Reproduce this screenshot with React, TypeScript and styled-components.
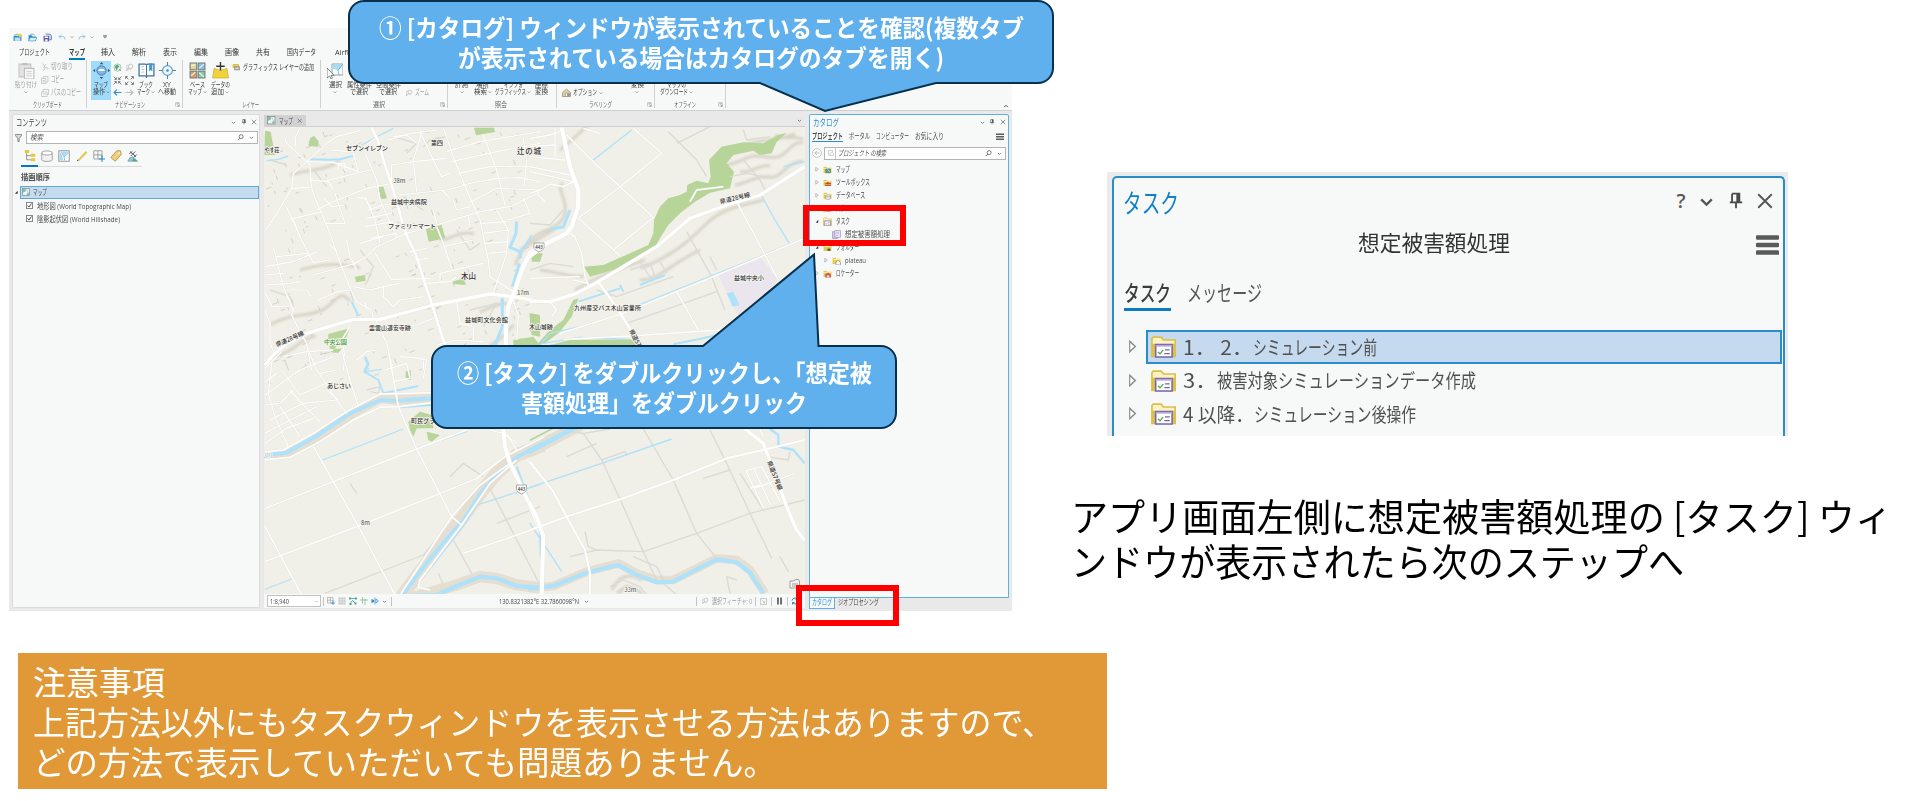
import React, { useLayoutEffect, useRef, useState } from "react";
import styled, { createGlobalStyle } from "styled-components";

const JP = '"Noto Sans CJK JP", sans-serif';
const UI = '"Open Sans", "Noto Sans CJK JP", sans-serif';
const BLUE = "#0079c1";
const INK = "#4a4a4a";

const Global = createGlobalStyle`
  *, *::before, *::after { box-sizing: border-box; }
  body { margin: 0; background: #fff; font-family: ${JP}; }
  svg { display: block; flex: none; }
`;

/* ---------- condensed text ---------- */

const FitBox = styled.span<{ $w: number }>`
  display: inline-block;
  flex: none;
  width: ${(p) => p.$w}px;
  white-space: pre;
  text-align: left;
`;
const FitInner = styled.span`
  display: inline-block;
  transform-origin: 0 50%;
`;

/* Condenses or widens one line of text so that it takes exactly w pixels. */
function Fit({ w, children }: { w: number; children: string }) {
  const ref = useRef<HTMLSpanElement>(null);
  const [ratio, setRatio] = useState(1);
  useLayoutEffect(() => {
    if (ref.current && ref.current.offsetWidth) {
      setRatio(w / parseFloat(getComputedStyle(ref.current).width));
    }
  }, [w, children]);
  return (
    <FitBox $w={w}>
      <FitInner ref={ref} style={{ transform: `scaleX(${ratio})` }}>
        {children}
      </FitInner>
    </FitBox>
  );
}

/* ---------- icons (16 x 16 grid) ---------- */

const folder = (
  <>
    <path d="M1 3h5l1.5 2H15v9H1z" fill="#e6ca4c" />
    <path d="M2.5 5.5h11V7h-11z" fill="#fdf6cf" />
  </>
);
const mapTile = (
  <>
    <rect x="1" y="1" width="14" height="14" fill="#eef3f2" stroke="#6b7b80" strokeWidth="1.2" />
    <path d="M2 2h6l-1 5-5 2z" fill="#7fc29b" />
    <path d="M9 14l2-5 3 2v3z" fill="#7fc29b" />
    <path d="M10 2v4l4 4" stroke="#86bfd8" fill="none" />
  </>
);

const ICONS: Record<string, React.ReactNode> = {
  newProject: (
    <>
      <path d="M1 5h14v9H1z" fill="#2f8fc4" />
      <path d="M3 8h10v6H3z" fill="#bfe1f2" />
      <path d="M2 4l6-2 5 3" stroke="#3b6f8c" fill="none" />
      <circle cx="12.5" cy="4" r="3" fill="#f0cf45" />
    </>
  ),
  open: (
    <>
      <path d="M1 4h6l1 2h6v8H1z" fill="#2f8fc4" />
      <path d="M4 8h12l-3 6H1z" fill="#d9edf7" stroke="#2f8fc4" />
      <path d="M3 4c2-3 6-3 9 0" stroke="#3b6f8c" fill="none" />
    </>
  ),
  save: (
    <>
      <path d="M5 2h8l2 3v7h-4" fill="#cfe0f0" stroke="#4a6d93" strokeWidth="1.3" />
      <path d="M1 5h10v10H1z" fill="#6a5aa8" />
      <path d="M3 6h6v3H3zM4 11h4v4H4z" fill="#fff" />
    </>
  ),
  undo: <path d="M6 3L2 7l4 4M2 7h8q4 0 4 6" stroke="#8fbfe0" strokeWidth="1.8" fill="none" />,
  redo: <path d="M10 3l4 4-4 4M14 7H6q-4 0-4 6" stroke="#8fbfe0" strokeWidth="1.8" fill="none" />,
  chev: <path d="M3 6l5 5 5-5" stroke="#555" strokeWidth="2.2" fill="none" />,
  up: <path d="M3 11l5-5 5 5" stroke="#444" strokeWidth="2.4" fill="none" />,
  qat: <path d="M3 4h10M4 7l4 4 4-4z" stroke="#555" strokeWidth="1.6" fill="none" />,
  pin: (
    <>
      <path d="M4.500 1.500h6.500V9M4.500 1.500V9M2.500 9.300h11M8 9v5.500" stroke="#4a4a4a" strokeWidth="1.600" fill="none" />
      <path d="M8.300 1.500h3V9h-3z" fill="#4a4a4a" />
    </>
  ),
  close: <path d="M2 2l12 12M14 2L2 14" stroke="#555" strokeWidth="1.7" fill="none" />,
  menu: <path d="M1 2.5h14M1 8h14M1 13.5h14" stroke="#5a5a5a" strokeWidth="3.200" strokeLinecap="round" />,
  search: (
    <>
      <circle cx="9.5" cy="6" r="4.6" stroke="#555" strokeWidth="1.7" fill="none" />
      <path d="M6 9.5L1.500 14" stroke="#555" strokeWidth="1.9" />
    </>
  ),
  filter: <path d="M1 1h14v2l-5.500 6v6h-3V9L1 3z" fill="#d8d8d8" stroke="#6a6a6a" strokeWidth="1.5" />,
  paste: (
    <>
      <path d="M1 2h11v12H1z" fill="#e3e3e3" stroke="#c4c4c4" />
      <path d="M4 1h5v2H4z" fill="#bdbdbd" />
      <path d="M6 6h9v10H6z" fill="#f6f6f6" stroke="#bcbcbc" />
      <path d="M8 9h5M8 11h5M8 13h5" stroke="#ccc" strokeWidth=".8" />
    </>
  ),
  cut: <path d="M3 1l7 10M10 2L5 10M3 13a2 2 0 1 0 2-3M10 11a2 2 0 1 1 3 2" stroke="#b9b9b9" strokeWidth="1.5" fill="none" />,
  copy: <path d="M1 5h9v10H1zM5 5V1h9v11h-4M3 9h5M3 12h5" stroke="#b9b9b9" strokeWidth="1.4" fill="none" />,
  copyPath: <path d="M1 6h11v9H1zM4 6V1h11v10h-3M4 10h6" stroke="#b9b9b9" strokeWidth="1.4" fill="none" />,
  explore: (
    <>
      <circle cx="8" cy="8" r="4.4" fill="#7fb6e8" stroke="#3d6fa3" strokeWidth=".8" />
      <path d="M5 8.500c0-3 6-3 6 0z" fill="#fff" />
      <path d="M8 0l1.700 2H6.300zM8 16l1.700-2H6.300zM0 8l2-1.700v3.400zM16 8l-2-1.700v3.400z" fill="#44545f" />
    </>
  ),
  globe: (
    <>
      <circle cx="8" cy="8" r="6.500" fill="#d6efe3" stroke="#8fa5a8" />
      <path d="M4 5l4-2 3 3-3 3-1 4-3-4z" fill="#53a56d" />
      <path d="M11 11l3 3" stroke="#888" strokeWidth="1.500" />
    </>
  ),
  zoomSel: (
    <>
      <path d="M3 4h8v7H3z" fill="#eee" stroke="#c7c7c7" />
      <circle cx="10" cy="6" r="4" stroke="#c0c0c0" strokeWidth="1.500" fill="#f7f7f7" />
      <path d="M7 9l-5 5" stroke="#c0c0c0" strokeWidth="2" />
    </>
  ),
  shrink: <path d="M1 1l5 5M2.500 6H6V2.500M15 1l-5 5M13.500 6H10V2.500M1 15l5-5M2.500 10H6v3.500M15 15l-5-5M13.500 10H10v3.500" stroke="#555" strokeWidth="1.300" fill="none" />,
  grow: <path d="M6 6L1.500 1.500M5 1H1v4M10 6l4.500-4.500M11 1h4v4M6 10l-4.500 4.500M5 15H1v-4M10 10l4.500 4.500M11 15h4v-4" stroke="#555" strokeWidth="1.300" fill="none" />,
  back: <path d="M7 3L2 8l5 5M2 8h13" stroke="#2d8ccc" strokeWidth="2" fill="none" />,
  fwd: <path d="M9 3l5 5-5 5M14 8H1" stroke="#b9b9b9" strokeWidth="2" fill="none" />,
  book: (
    <>
      <path d="M1 2h6q1 0 1 1 0-1 1-1h6v11H9q-1 0-1 2 0-2-1-2H1z" fill="#fff" stroke="#41729c" strokeWidth="1.200" />
      <path d="M8 3v11" stroke="#41729c" />
      <path d="M10.500 1.500h3V9L12 7.500 10.500 9z" fill="#3d9bd6" />
      <path d="M3 4.500h3M3 7h3M3 9.500h3" stroke="#9fb6c6" strokeWidth=".7" />
    </>
  ),
  xy: (
    <>
      <circle cx="8" cy="8" r="4.600" stroke="#56a8dc" strokeWidth="1.100" fill="#f2f9fd" />
      <circle cx="8" cy="8" r="1.200" fill="#2d8ccc" />
      <path d="M8 0v3.500M8 12.500V16M0 8h3.500M12.500 8H16" stroke="#777" />
    </>
  ),
  basemap: (
    <>
      <path d="M1 1h6.300v6.300H1z" fill="#e6d58b" stroke="#6f7f7f" />
      <path d="M8.700 1H15v6.300H8.700z" fill="#87bfe0" stroke="#6f7f7f" />
      <path d="M1 8.700h6.300V15H1z" fill="#dd9a62" stroke="#6f7f7f" />
      <path d="M8.700 8.700H15V15H8.700z" fill="#8dc79e" stroke="#6f7f7f" />
      <path d="M2 3.500l4-1M9.500 6l4.500-4M2 13l4-3.500M9.500 10l4.500 4" stroke="#f4f4ec" strokeWidth="1.100" fill="none" />
    </>
  ),
  addData: (
    <>
      <path d="M2 6l6 2 6-2 1.500 9H.5z" fill="#f0d33c" stroke="#cfae28" strokeWidth=".700" />
      <path d="M8 0v8M4 4h8" stroke="#333" strokeWidth="1.300" />
    </>
  ),
  graphics: (
    <>
      <path d="M2 3h11v6H2z" fill="#f0d33c" stroke="#bd9a1e" />
      <path d="M5 7h10v7H5z" fill="#b6b6b6" stroke="#777" />
      <path d="M7 12l3-3 3 3z" fill="#efe3a0" />
    </>
  ),
  select: (
    <>
      <path d="M5 1h11v11H5z" fill="#fff" stroke="#7f9aa8" strokeWidth=".900" />
      <path d="M5.500 1.500h10l-4.500 6-5.500-2z" fill="#a6dcf3" />
      <path d="M15.500 1.500l-4.500 6 1 4.500" stroke="#56a8dc" fill="none" strokeWidth=".800" />
      <path d="M0 5v10l2.500-2 1.700 3 1.300-.8-1.500-2.800H7z" fill="#fff" stroke="#666" strokeWidth=".800" />
    </>
  ),
  house: (
    <>
      <path d="M1 8l7-6 7 6v7H1z" fill="#e9cf9e" stroke="#7c6a48" />
      <path d="M6 9h4v6H6z" fill="#fff" stroke="#777" />
      <circle cx="12" cy="12" r="3" fill="#999" />
    </>
  ),
  launcher: <path d="M2 14V2h12M5 5h9v9H5M7 7l6 6M13 9v4H9" stroke="#777" strokeWidth="1.300" fill="none" />,
  map: mapTile,
  tree: (
    <>
      <path d="M1 0h6v4H1zM9 5h6v4H9zM9 11h6v4H9z" fill="#e8c83c" />
      <path d="M3.500 4v9H9M3.500 7.500H9" stroke="#777" fill="none" />
    </>
  ),
  db: (
    <>
      <path d="M1 4v9c0 3 14 3 14 0V4" fill="#f2f2f2" stroke="#8a8a8a" />
      <ellipse cx="8" cy="4" rx="7" ry="2.700" fill="#fff" stroke="#8a8a8a" />
    </>
  ),
  selMap: (
    <>
      <path d="M1 1h14v14H1z" fill="#fff" stroke="#777" />
      <path d="M2 2h3l3 6 6-5v-1H2zM2 2v12h5L5 6z" fill="#a6dcf3" />
      <path d="M4 2l4 7 6-5M8 9l1 5" stroke="#56a8dc" fill="none" strokeWidth=".900" />
    </>
  ),
  pencil: (
    <>
      <path d="M2 14L13 2l1.500 1.500L3.500 14.500z" fill="#f0d33c" stroke="#c9a626" strokeWidth=".700" />
      <path d="M1 15l1-2.500L3.500 14z" fill="#555" />
    </>
  ),
  snap: (
    <>
      <path d="M1 1h11v11H1zM6.500 1v11M1 6.500h11" stroke="#888" fill="none" />
      <path d="M12 7v9M8 12h8" stroke="#2d8ccc" strokeWidth="1.500" />
    </>
  ),
  tag: (
    <>
      <path d="M1 10L9 1h5l1 5-8 9z" fill="#efd07c" stroke="#a48640" />
      <circle cx="12" cy="4" r="1.100" fill="#fff" />
    </>
  ),
  imagery: (
    <>
      <path d="M1 15l3-5 4-1 6 6z" fill="#8cc9e8" stroke="#568" strokeWidth=".600" />
      <path d="M4 2l8 7M5 8l6-6M3 5l4-3M9 10l4-4" stroke="#555" strokeWidth="1.300" />
      <path d="M9 11l5 4H7z" fill="#5ba56e" />
    </>
  ),
  fMap: (
    <>
      {folder}
      <path d="M5 7h8v7H5z" fill="#5ba58a" stroke="#46707c" />
      <path d="M8 8l4 4" stroke="#fff" />
    </>
  ),
  fTool: (
    <>
      {folder}
      <path d="M4 9h10v5H4z" fill="#c7402f" />
      <path d="M6 9q3-4 6 0" stroke="#c7402f" strokeWidth="1.400" fill="none" />
      <path d="M4 11.500h10" stroke="#fff" strokeWidth=".800" />
    </>
  ),
  fDb: (
    <>
      {folder}
      <path d="M5 8.500v5c0 2 8 2 8 0v-5" fill="#eee" stroke="#8a8a8a" />
      <ellipse cx="9" cy="8.500" rx="4" ry="1.500" fill="#fff" stroke="#8a8a8a" />
    </>
  ),
  fTask: (
    <>
      <path d="M.6 15V2.500L1.500 1.500h5l1.500 2h7.500V15z" fill="#fbf3c4" stroke="#dcc04a" strokeWidth="1.100" />
      <path d="M.6 6h2.200v9H.6zM13.500 6h2v9h-2z" fill="#dcc04a" />
      <path d="M3 6.500h10.500v8.800H3z" fill="#fff" stroke="#7866ad" strokeWidth="1" />
      <path d="M3 7.500h10.500" stroke="#b5a9d6" strokeWidth="1.200" />
      <path d="M4.500 11.800l1.300 1.300 2-2.600" stroke="#58ab5c" fill="none" strokeWidth=".900" />
      <path d="M9 10.300h3M8.500 12.900h3.500" stroke="#7866ad" strokeWidth=".900" />
    </>
  ),
  task: (
    <>
      <path d="M1 3h9v12H1z" fill="#d5cbe8" stroke="#8a76b5" />
      <path d="M5 1h10v12H5z" fill="#f3f0fa" stroke="#8a76b5" />
      <path d="M7 4h6M7 7h6M7 10h4" stroke="#8a76b5" strokeWidth=".800" />
    </>
  ),
  fHome: (
    <>
      {folder}
      <path d="M7 11l4-3.500 4 3.500v5H7z" fill="#fff" stroke="#777" />
    </>
  ),
  fFolder: (
    <>
      {folder}
      <path d="M8 10h5v4H8z" fill="#555" />
    </>
  ),
  fLoc: (
    <>
      {folder}
      <path d="M4 9.500L9 6l5 3.500V15H4z" fill="#d8584a" />
      <path d="M7 11h4v4H7z" fill="#bfe1f2" />
    </>
  ),
  fStyle: (
    <>
      {folder}
      <path d="M4 8h10v6H4z" fill="#b9a2cf" />
    </>
  ),
  closedArrow: <path d="M3 1.500L13 8 3 14.500z" fill="#fff" stroke="#8a8a8a" strokeWidth="2" />,
  openArrow: <path d="M13 3v10H3z" fill="#333" />,
  backCircle: (
    <>
      <circle cx="8" cy="8" r="7" stroke="#a5a5a5" fill="#fff" />
      <path d="M8 4.500L4.500 8 8 11.500M4.500 8H12" stroke="#a5a5a5" strokeWidth="1.200" fill="none" />
    </>
  ),
  homeBox: <path d="M1 1h11v5M1 1v13h4M5 10l5-4 5 4v5H6v-5" stroke="#999" strokeWidth="1.200" fill="none" />,
  grid: (
    <>
      <path d="M1 1h14v14H1z" fill="#c9c9c9" />
      <path d="M5.500 1v14M10.500 1v14M1 5.500h14M1 10.500h14" stroke="#f4f4f4" strokeWidth=".900" />
    </>
  ),
  trace: (
    <>
      <path d="M2 3h12M2 14l5-7 6 6" stroke="#2d8ccc" strokeWidth="1.500" fill="none" />
      <path d="M0 1h4v4H0zM12 1h4v4h-4zM11 11h4v4h-4zM1 12h4v4H1z" fill="#5ba56e" />
    </>
  ),
  cross: <path d="M5 0v13M0 6h16M10 3v13" stroke="#79b98a" strokeWidth="1.500" />,
  flip: (
    <>
      <path d="M1 4l5 2v4l-5 2z" fill="#2d8ccc" />
      <path d="M8 1v14M10 4l5 4-5 4z" stroke="#2d8ccc" strokeWidth="1.400" fill="none" />
    </>
  ),
  box: <path d="M1 1h14v14H1zM4 4l7 7M11 7v4H7" stroke="#aaa" strokeWidth="1.400" fill="none" />,
  pause: <path d="M4.500 1v14M11.500 1v14" stroke="#444" strokeWidth="3.400" />,
  refresh: <path d="M2 7q1-5 6-5 3 0 5 3M13 1v4H9M14 9q-1 5-6 5-3 0-5-3M3 15v-4h4" stroke="#2d8ccc" strokeWidth="2" fill="none" />,
};

function Icon({ k, s = 8, h }: { k: string; s?: number; h?: number }) {
  return (
    <svg width={s} height={h ?? s} viewBox="0 0 16 16" preserveAspectRatio="none">
      {ICONS[k]}
    </svg>
  );
}

/* ---------- slide skeleton ---------- */

const Slide = styled.main`
  position: relative;
  width: 1914px;
  height: 801px;
  overflow: hidden;
  background: #fff;
  display: flex;
  flex-direction: column;
`;
const TopRow = styled.div`
  display: flex;
  height: 653px;
  padding-left: 9px;
`;
const RightColumn = styled.div`
  display: flex;
  flex-direction: column;
  margin-left: 58px;
  padding-top: 172px;
`;

/* ---------- GIS application window ---------- */

const Win = styled.section`
  width: 1003px;
  height: 583px;
  margin-top: 28px;
  display: flex;
  flex-direction: column;
  background: #e9e9e9;
  font-family: ${UI};
  font-size: 7.800px;
  color: ${INK};
`;
const Ribbon = styled.header`
  height: 82.500px;
  background: #f7f9f9;
  border-bottom: 1px solid #cfcfcf;
`;
const Line = styled.div<{ $h: number; $pl?: number; $gap?: number }>`
  display: flex;
  align-items: center;
  height: ${(p) => p.$h}px;
  line-height: ${(p) => p.$h}px;
  padding-left: ${(p) => p.$pl ?? 0}px;
  gap: ${(p) => p.$gap ?? 0}px;
`;
const RibbonTabs = styled.nav`
  display: flex;
  height: 14px;
  padding-left: 10px;
  line-height: 13px;
  color: #333;
`;
const RibbonTab = styled.span<{ $ml?: number; $on?: boolean }>`
  margin-left: ${(p) => p.$ml ?? 0}px;
  height: 14px;
  border-bottom: ${(p) => (p.$on ? `2px solid ${BLUE}` : "0")};
  font-weight: ${(p) => (p.$on ? 700 : 400)};
`;
const Groups = styled.div`
  display: flex;
  height: 50px;
`;
const Group = styled.div<{ $w: number }>`
  width: ${(p) => p.$w}px;
  height: 48px;
  border-right: 1px solid #d0d0d0;
  display: flex;
  flex-direction: column;
`;
const GroupBody = styled.div`
  display: flex;
  height: 41px;
`;
const GroupLabel = styled.div<{ $pl: number }>`
  display: flex;
  align-items: center;
  height: 9px;
  line-height: 9px;
  padding-left: ${(p) => p.$pl}px;
  font-size: 7.400px;
  color: #666;
`;
const LauncherSlot = styled.span`
  margin-left: auto;
  padding-right: 2px;
`;
const Tool = styled.div<{ $w: number; $ml?: number; $on?: boolean; $off?: boolean }>`
  width: ${(p) => p.$w}px;
  height: 39px;
  margin: 1px 0 0 ${(p) => p.$ml ?? 0}px;
  display: flex;
  flex: none;
  flex-direction: column;
  align-items: center;
  background: ${(p) => (p.$on ? "#9fdcfb" : "transparent")};
  color: ${(p) => (p.$off ? "#a0a0a0" : "#3c3c3c")};
`;
const ToolIcon = styled.div`
  height: 19.500px;
  display: flex;
  align-items: center;
`;
const ToolLine = styled.div`
  height: 7.600px;
  line-height: 7.600px;
  font-size: 7.400px;
  display: flex;
  align-items: center;
  gap: 1px;
`;
const Stack = styled.div<{ $ml: number; $off?: boolean }>`
  margin-left: ${(p) => p.$ml}px;
  display: flex;
  flex: none;
  flex-direction: column;
  color: ${(p) => (p.$off ? "#a0a0a0" : "#3c3c3c")};
`;

function BigTool(p: { w: number; ml?: number; icon?: string; s?: number; on?: boolean; off?: boolean; lines: [string, number, boolean?][] }) {
  return (
    <Tool $w={p.w} $ml={p.ml} $on={p.on} $off={p.off}>
      <ToolIcon>{p.icon && <Icon k={p.icon} s={p.s ?? 16} />}</ToolIcon>
      {p.lines.map(([t, w, c], i) => (
        <ToolLine key={i}>
          {t && <Fit w={w}>{t}</Fit>}
          {c && <Icon k="chev" s={4} />}
        </ToolLine>
      ))}
    </Tool>
  );
}

const TABS: [string, number, number][] = [
  ["プロジェクト", 31, 0],
  ["マップ", 16, 18.5],
  ["挿入", 14, 16.5],
  ["解析", 14, 16.5],
  ["表示", 14, 17],
  ["編集", 14, 17],
  ["画像", 14, 17],
  ["共有", 14, 17],
  ["国内データ", 29, 17],
  ["Airflow", 24, 19],
];

function RibbonBar() {
  return (
    <Ribbon>
      <Line $h={18} $pl={4}>
        <Icon k="newProject" s={9} />
        <Line $h={18} $pl={6}><Icon k="open" s={9} /></Line>
        <Line $h={18} $pl={6}><Icon k="save" s={9} /></Line>
        <Line $h={18} $pl={6} $gap={4}><Icon k="undo" s={8} /><Icon k="chev" s={4} /></Line>
        <Line $h={18} $pl={4} $gap={4}><Icon k="redo" s={8} /><Icon k="chev" s={4} /></Line>
        <Line $h={18} $pl={8}><Icon k="qat" s={6} /></Line>
      </Line>
      <RibbonTabs>
        {TABS.map(([t, w, ml], i) => (
          <RibbonTab key={t} $ml={ml} $on={i === 1}><Fit w={w}>{t}</Fit></RibbonTab>
        ))}
      </RibbonTabs>
      <Groups>
        <Group $w={78}>
          <GroupBody>
            <BigTool w={22} ml={6} icon="paste" s={17} off lines={[["貼り付け", 22], ["", 0, true]]} />
            <Stack $ml={3} $off>
              <Line $h={13} $pl={1} $gap={2}><Icon k="cut" /><Fit w={22}>切り取り</Fit></Line>
              <Line $h={13} $pl={1} $gap={2}><Icon k="copy" s={8} /><Fit w={13}>コピー</Fit></Line>
              <Line $h={13} $pl={1} $gap={2}><Icon k="copyPath" /><Fit w={30}>パスのコピー</Fit></Line>
            </Stack>
          </GroupBody>
          <GroupLabel $pl={24}><Fit w={29}>クリップボード</Fit></GroupLabel>
        </Group>
        <Group $w={96}>
          <GroupBody>
            <BigTool w={20} ml={4} icon="explore" s={17} on lines={[["マップ", 14], ["操作", 12, true]]} />
            <Stack $ml={2}>
              <Line $h={14} $gap={3}><Icon k="globe" s={9} /><Icon k="zoomSel" s={9} /></Line>
              <Line $h={12} $gap={3}><Icon k="shrink" s={9} /><Icon k="grow" s={9} /></Line>
              <Line $h={13} $gap={3}><Icon k="back" s={9} /><Icon k="fwd" s={9} /></Line>
            </Stack>
            <BigTool w={18} ml={3} icon="book" s={17} lines={[["ブック", 14], ["マーク", 13, true]]} />
            <BigTool w={20} ml={2} icon="xy" s={17} lines={[["XY", 8], ["へ移動", 18]]} />
          </GroupBody>
          <GroupLabel $pl={28}>
            <Fit w={30}>ナビゲーション</Fit>
            <LauncherSlot><Icon k="launcher" s={5} /></LauncherSlot>
          </GroupLabel>
        </Group>
        <Group $w={138}>
          <GroupBody>
            <BigTool w={20} ml={4} icon="basemap" s={17} lines={[["ベース", 15], ["マップ", 14, true]]} />
            <BigTool w={20} ml={3} icon="addData" s={17} lines={[["データの", 19], ["追加", 13, true]]} />
            <Stack $ml={2}>
              <Line $h={14} $gap={3}><Icon k="graphics" /><Fit w={71}>グラフィックス レイヤーの追加</Fit></Line>
            </Stack>
          </GroupBody>
          <GroupLabel $pl={59}><Fit w={17}>レイヤー</Fit></GroupLabel>
        </Group>
        <Group $w={127}>
          <GroupBody>
            <BigTool w={16} ml={6} icon="select" s={16} lines={[["選択", 13], ["", 0, true]]} />
            <BigTool w={26} ml={3} lines={[["属性条件", 25], ["で選択", 18]]} />
            <BigTool w={26} ml={3} lines={[["空間条件", 25], ["で選択", 18]]} />
            <Stack $ml={4} $off>
              <Line $h={26}> </Line>
              <Line $h={13} $gap={2}><Icon k="zoomSel" /><Fit w={14}>ズーム</Fit></Line>
            </Stack>
          </GroupBody>
          <GroupLabel $pl={52}>
            <Fit w={12}>選択</Fit>
            <LauncherSlot><Icon k="launcher" s={5} /></LauncherSlot>
          </GroupLabel>
        </Group>
        <Group $w={109}>
          <GroupBody>
            <BigTool w={13} ml={7} lines={[["計測", 13], ["", 0, true]]} />
            <BigTool w={19} ml={5} lines={[["場所", 13], ["検索", 13, true]]} />
            <BigTool w={38} ml={2} lines={[["インフォ", 19], ["グラフィックス", 31, true]]} />
            <BigTool w={13} ml={3} lines={[["座標", 13], ["変換", 13]]} />
          </GroupBody>
          <GroupLabel $pl={47}><Fit w={12}>照会</Fit></GroupLabel>
        </Group>
        <Group $w={98}>
          <GroupBody>
            <Stack $ml={5}>
              <Line $h={26}> </Line>
              <Line $h={13} $gap={2}><Icon k="house" s={9} /><Fit w={24}>オプション</Fit><Icon k="chev" s={4} /></Line>
            </Stack>
            <BigTool w={14} ml={27} lines={[["変換", 13], ["", 0, true]]} />
          </GroupBody>
          <GroupLabel $pl={32}>
            <Fit w={23}>ラベリング</Fit>
            <LauncherSlot><Icon k="launcher" s={5} /></LauncherSlot>
          </GroupLabel>
        </Group>
        <Group $w={71}>
          <GroupBody>
            <BigTool w={34} ml={4} lines={[["マップの", 19], ["ダウンロード", 28, true]]} />
          </GroupBody>
          <GroupLabel $pl={19}>
            <Fit w={22}>オフライン</Fit>
            <LauncherSlot><Icon k="launcher" s={5} /></LauncherSlot>
          </GroupLabel>
        </Group>
        <Line $h={92} $pl={277}><Icon k="up" s={6} /></Line>
      </Groups>
    </Ribbon>
  );
}

const Dock = styled.div`
  display: flex;
  flex: 1;
  min-height: 0;
`;
const Pane = styled.section<{ $w: number; $h: number; $active?: boolean }>`
  width: ${(p) => p.$w}px;
  height: ${(p) => p.$h}px;
  background: #f7f9f9;
  border: 1px solid ${(p) => (p.$active ? "#5fb0de" : "#dcdcdc")};
  border-radius: 2px 2px 0 0;
`;
const ContentsWrap = styled.div`
  padding: 3.500px 4px 0 3px;
`;
const PaneTitle = styled.div<{ $active?: boolean }>`
  display: flex;
  align-items: center;
  height: 15px;
  line-height: 13px;
  padding: 0 2px 1px 3px;
  font-size: 9.500px;
  color: ${(p) => (p.$active ? "#2a8fcf" : "#444")};
`;
const Controls = styled.span`
  margin-left: auto;
  display: flex;
  align-items: center;
  gap: 4.500px;
`;
const SearchBox = styled.div<{ $w: number }>`
  width: ${(p) => p.$w}px;
  height: 13px;
  border: 1px solid #b4b4b4;
  background: #fff;
  display: flex;
  align-items: center;
  padding: 0 3px;
  line-height: 11px;
  font-style: italic;
  color: #555;
`;
const SearchEnd = styled.span`
  margin-left: auto;
  display: flex;
  align-items: center;
  gap: 5px;
`;
const IconTabs = styled.div`
  display: flex;
  height: 21px;
  margin: 1px 0 0 8px;
`;
const IconTab = styled.span<{ $on?: boolean }>`
  width: 17.300px;
  height: 21px;
  display: flex;
  align-items: center;
  justify-content: center;
  border-bottom: ${(p) => (p.$on ? `2px solid ${BLUE}` : "1px solid #dadada")};
`;
const Heading = styled.div`
  height: 18.500px;
  line-height: 21px;
  padding-left: 8px;
  font-weight: 700;
`;
const LayerRow = styled.div`
  display: flex;
  align-items: center;
  height: 13px;
`;
const SelectedLayer = styled.div`
  display: flex;
  align-items: center;
  gap: 3px;
  width: 240px;
  height: 13px;
  padding-left: 1px;
  background: #c5dbee;
  border: 1px solid #5fa8d8;
`;
const Check = styled.span`
  width: 7px;
  height: 7px;
  border: 1px solid #888;
  background: #fff;
  display: flex;
  align-items: center;
  justify-content: center;
  margin: 0 4px 0 13px;
`;

function CheckMark() {
  return (
    <Check>
      <svg width="5" height="5" viewBox="0 0 10 10">
        <path d="M1 5l3 3 5-7" stroke="#333" strokeWidth="1.800" fill="none" />
      </svg>
    </Check>
  );
}

function ContentsPane() {
  return (
    <ContentsWrap>
      <Pane $w={248} $h={494}>
        <PaneTitle>
          <Fit w={31}>コンテンツ</Fit>
          <Controls><Icon k="chev" s={5} /><Icon k="pin" s={6} /><Icon k="close" s={6} /></Controls>
        </PaneTitle>
        <Line $h={15} $pl={2} $gap={4}>
          <Icon k="filter" s={7} h={8} />
          <SearchBox $w={232}>
            <Fit w={13}>検索</Fit>
            <SearchEnd><Icon k="search" s={7} /><Icon k="chev" s={5} /></SearchEnd>
          </SearchBox>
        </Line>
        <IconTabs>
          {["tree", "db", "selMap", "pencil", "snap", "tag", "imagery"].map((k, i) => (
            <IconTab key={k} $on={i === 0}><Icon k={k} s={12} /></IconTab>
          ))}
        </IconTabs>
        <Heading><Fit w={29}>描画順序</Fit></Heading>
        <Line $h={13} $pl={1} $gap={1}>
          <Icon k="openArrow" s={4.500} />
          <SelectedLayer><Icon k="map" s={8} /><Fit w={14}>マップ</Fit></SelectedLayer>
        </Line>
        <LayerRow><CheckMark /><Fit w={94}>地形図 (World Topographic Map)</Fit></LayerRow>
        <LayerRow><CheckMark /><Fit w={83}>陰影起伏図 (World Hillshade)</Fit></LayerRow>
      </Pane>
    </ContentsWrap>
  );
}

/* ---------- map ---------- */

type Lines = [number, string[]];
interface Sheet {
  x: number;
  y: number;
  green: string[];
  sand: Lines[];
  water: Lines[];
  field: string[];
  roads: Lines[];
}

const SHEETS: Sheet[] = [
  {
    x: 250, y: 110,
    green: [
      "45,62 62,65 75,135 43,135", "175,108 180,85 192,77 206,95 205,110", "672,53 732,53 735,66 678,76",
      "383,228 400,230 411,265 392,268", "527,355 575,345 586,385 536,395", "315,500 345,495 347,512 318,517",
      "607,515 640,505 648,525 610,522", "235,672 300,655 285,690 262,705 245,730 235,700",
      "838,610 870,615 870,680 845,675", "845,445 870,430 870,455", "790,690 850,680 870,705 790,705",
    ],
    sand: [],
    water: [
      [4, ["50,152 85,148 115,138", "335,105 385,78 430,55"]],
      [6, ["180,148 240,149 270,148 308,138", "305,575 325,618", "345,740 355,760 343,782", "845,375 830,400 812,425"]],
      [9, ["800,335 798,370 780,412 810,425 812,445", "808,460 800,490 787,530", "757,565 757,650 735,705"]],
    ],
    field: [
      "430,80 500,100 470,130", "520,110 540,90 590,80", "60,540 120,560 130,590", "300,540 310,575", "190,180 230,230",
      "660,600 740,580 700,650", "460,260 520,300", "620,360 660,420 690,400", "60,150 110,165", "330,420 370,470 350,520",
    ],
    roads: [
      [3.5, [
        "105,85 110,100 130,118 170,155 180,165 184,230 195,265 240,370 265,445 300,535 320,575 365,600 370,625",
        "150,53 135,85 138,110", "45,363 75,320 125,235 130,190 170,155", "170,155 230,100 260,80 330,62",
        "240,120 300,125 345,110 375,85", "170,155 250,157 325,185", "265,180 265,160 285,160 285,182", "125,235 180,232",
        "200,300 240,280 350,235 415,222", "230,212 360,180", "180,210 235,215 250,240", "220,262 245,290 285,285",
        "255,250 285,340 230,340", "110,290 150,380 190,458 240,450", "120,328 215,305", "130,330 150,380", "45,470 130,455 200,425",
        "70,410 100,530 130,600 125,615 150,665 170,700 185,780", "45,525 120,520 150,515", "45,495 100,490",
        "80,440 175,430", "115,540 170,540 185,560", "190,495 310,462 350,440 380,410 470,370 560,345 690,305 780,290 870,245",
        "310,130 325,185", "345,130 380,210 390,270 440,380", "345,260 375,330 390,400", "320,262 345,265 365,300",
        "355,300 400,285 435,280", "350,325 425,310", "345,350 430,335", "360,385 440,370", "330,400 400,380",
        "290,390 300,440 320,480", "240,405 262,425", "375,430 425,508 540,505", "425,225 425,165 490,155 590,145",
        "515,70 490,150 500,245", "430,80 470,75 500,100", "415,90 480,70 560,60", "445,255 590,240 650,225",
        "510,65 560,170 575,200 600,190", "580,53 610,140 650,240 690,330 715,450 720,500 790,545",
        "590,125 690,95 870,65", "605,155 740,125 870,100", "625,190 720,170 820,168 870,175",
        "635,225 740,205 810,203 870,215", "655,280 740,235 870,240", "700,75 740,180 765,285", "820,85 830,150 822,230",
        "610,270 620,300 660,290", "575,240 600,265", "695,340 770,335", "700,370 775,360", "707,400 770,395", "715,430 770,425",
        "740,300 775,360 770,430 730,550", "820,265 840,310 775,330", "560,350 580,400 605,475", "580,410 670,390",
        "530,520 600,515 620,500", "570,515 570,490 700,460", "480,425 530,415", "495,450 535,445",
        "620,575 630,640 670,650 670,690", "375,625 410,700 430,780", "430,650 500,645 550,625", "45,600 60,640 60,700 75,735",
        "300,650 275,690 285,740 280,780", "45,545 65,590 125,588", "310,530 360,540 400,530 450,520",
        "400,530 400,560 430,590", "430,590 450,570 520,560", "205,570 260,545 300,540", "345,575 350,600", "560,705 620,690 700,695",
        "100,740 170,725 250,720", "450,740 520,745 520,780", "790,570 805,620 800,690", "655,320 660,350", "550,300 560,340",
      ]],
      [8, ["365,53 385,95 400,150 430,240 465,365 500,440 525,520 545,580 575,675 585,705"]],
      [10, ["45,765 70,735 110,700 170,670 310,628 390,628 550,585 720,552 790,560 870,575"]],
      [13, ["872,410 840,430 815,480 795,540 775,590 768,650 768,705"]],
    ],
  },
  {
    x: 530, y: 110,
    green: [
      "770,68 740,95 725,130 690,135 670,122 610,135 590,160 612,185 600,235 540,248 495,275 450,310 415,345 390,385 375,412 320,445 250,480 180,500 162,470 220,465 300,430 355,405 370,370 372,330 390,290 415,265 450,255 470,245 472,225 500,212 535,220 542,200 537,150 575,110 640,97 700,100 745,75",
      "145,565 130,570 100,630 60,660 20,705 45,700 90,665 125,620", "0,610 25,615 20,650 0,665", "5,430 38,430 30,455 5,455",
      "120,690 300,688 340,705 60,705",
    ],
    sand: [],
    water: [
      [4, ["190,150 305,60", "695,258 735,330 778,400", "760,170 824,155", "290,600 400,555 550,495 700,435 824,385", "40,700 150,682 300,688", "30,705 60,670 150,650"]],
      [6, ["145,575 270,535", "330,525 405,495", "430,703 520,685 560,675", "270,525 280,545"]],
      [9, ["62,358 100,350 120,300"]],
    ],
    field: [
      "415,65 500,150 530,200", "440,100 540,50", "470,365 545,500 585,600", "330,455 365,510", "640,150 690,210 710,250",
      "300,480 360,460 375,500", "640,60 650,90 720,80", "540,440 560,480", "390,455 410,490", "290,640 560,545",
      "600,200 650,190 700,200", "200,540 260,560 430,500", "0,340 60,345 100,300", "0,480 60,460 130,470",
    ],
    roads: [
      [4, [
        "110,75 200,165 270,230 370,322 250,420", "270,230 395,130 310,55", "270,230 145,325 270,437",
        "620,275 705,435 745,510", "824,385 705,435 550,500 440,545 280,610 90,670", "440,545 505,660",
        "120,370 135,380 155,430 165,500 175,525", "0,140 105,150", "0,110 75,105", "75,53 75,140", "0,85 60,75 90,65",
        "0,185 130,215", "0,170 120,195", "0,250 30,240 60,222 100,230 130,215", "160,55 210,70", "20,250 45,275",
        "100,688 300,678 570,660", "60,575 80,600 65,620", "130,510 175,520", "0,505 150,500", "480,275 500,240 580,230",
      ]],
      [8, ["205,515 265,600 305,665 332,705"]],
      [10, ["0,573 60,575 140,550 205,515 380,410 480,325 590,285 690,255 824,170"]],
      [13, ["95,53 120,170 145,240 145,290 125,350 110,370 50,400 10,430 -4,440"]],
    ],
  },
  {
    x: 250, y: 350,
    green: [
      "245,-4 275,-4 265,8 250,8", "467,65 482,60 482,90 467,90",
      "475,215 510,185 545,195 550,235 500,235 490,260 480,240", "530,245 570,255 545,275 535,270",
    ],
    sand: [
      [28, ["45,318 110,310 200,265 300,195 390,145 440,150 545,145"]],
      [40, ["880,285 800,315 740,370 690,430 640,500 590,560 530,640 480,705 455,740"]],
      [34, ["480,745 560,722 620,705 690,680 740,685 800,705 875,714"]],
    ],
    water: [
      [3.5, ["218,330 460,237", "500,295 650,245", "545,650 640,530 680,465 760,440 870,403", "45,718 125,687", "345,65 395,58"]],
      [6, ["345,25 355,45 343,65 385,90 400,130 505,108", "800,350 830,430 870,540 872,620", "450,172 545,165"]],
      [12, ["45,315 110,308 200,258 300,190 390,150 440,152 545,145", "880,280 800,322 740,375 690,432 640,512 590,566 530,640 480,705 460,735"]],
      [13, ["480,738 560,735 620,708 690,680 740,685 800,708 875,714"]],
    ],
    field: [
      "225,730 520,615 580,545", "720,415 870,705", "610,570 665,670", "565,670 580,705", "300,400 320,430", "600,380 640,340 700,380",
      "350,120 390,110 385,130 360,125", "740,520 870,470",
    ],
    roads: [
      [3.5, [
        "45,55 95,5", "65,40 55,130 75,200 115,290", "175,0 200,60 260,150 290,190", "45,135 150,60 250,20",
        "95,60 150,135 250,90", "275,0 300,90 325,170", "60,210 160,160 260,150", "45,250 140,200 200,170", "90,170 150,260",
        "120,120 160,165 210,215", "45,165 90,160 130,120", "45,280 110,235 190,205", "45,95 80,70", "320,30 350,5 380,0",
        "210,70 260,60", "230,120 265,150", "405,60 470,40 480,85 430,95", "520,85 530,30 500,25", "720,240 760,250 800,280",
        "770,250 800,300", "830,330 870,380",
      ]],
      [4.5, [
        "45,330 120,322 210,275 310,210 390,172 445,170 545,158", "45,305 100,300 190,250 290,185 390,132 545,128",
        "45,475 250,395 500,297 650,240", "45,635 325,528 570,430 680,385 765,320 880,262", "190,290 250,395 325,528 435,735",
        "45,530 155,735", "415,0 445,170 500,297 605,500 635,525", "605,500 450,735",
        "800,330 720,400 635,525 510,690 505,712 540,720", "640,610 860,535", "780,340 690,405 605,500",
      ]],
      [12, ["760,237 765,290 780,340 810,400 872,540"]],
    ],
  },
  {
    x: 530, y: 350,
    green: ["0,268 60,237 70,237 0,274"],
    sand: [
      [36, ["-5,306 60,272 150,225"]],
      [26, ["0,715 70,708 170,665 265,640 320,670 380,690 430,690 500,655 560,625 620,630 660,660 705,730"]],
    ],
    water: [
      [4, ["0,412 215,340 425,267", "0,520 40,580 95,665"]],
      [7, ["720,237 745,255 745,290 790,300 824,340"]],
      [15, ["-5,306 60,272 150,225"]],
      [13, ["-5,716 70,708 170,668 265,645 320,675 380,697 430,695 500,658 560,628 620,637 660,668 700,730"]],
    ],
    field: [
      "160,250 215,330 270,448 340,605 380,690", "340,237 430,390 500,550 560,625", "540,240 590,340 660,490 725,625",
      "215,330 285,305 290,315", "110,320 200,280", "120,620 200,600 340,605 500,550 660,490 824,450", "165,545 175,590 200,600",
      "520,385 600,360", "630,370 700,480", "750,620 775,665", "600,730 590,680 620,690", "240,710 280,690 330,710 350,735",
      "260,725 290,705 320,725", "400,700 440,735", "710,320 775,330 780,305", "90,240 160,250 240,237", "310,620 380,650 400,690",
    ],
    roads: [
      [4, ["648,362 695,350 750,455", "648,362 700,475", "672,356 722,466", "675,415 790,372", "660,415 690,405", "700,260 690,237"]],
      [6, ["0,335 70,425 110,500 165,600 180,670 180,735", "0,540 110,500 270,448 430,390 590,325 700,300 824,270"]],
      [10, ["645,237 700,280 730,360 770,470 800,540 824,572"]],
      [12, ["-4,455 20,500 40,560 35,735"]],
    ],
  },
];

/* Short dashes that stand for blocks of houses; a small generator keeps them stable. */
const HOUSES: string[] = (() => {
  let seed = 17;
  const next = () => ((seed = (seed * 16807) % 2147483647) / 2147483647);
  const out: string[] = [];
  for (let i = 0; i < 210; i++) {
    const x = 266 + next() * 262;
    const y = 130 + next() * 250;
    if (y > 450 - (x - 264) * 0.3) continue;
    const flip = next() > 0.5;
    const l = 2 + next() * 4;
    out.push(`M${x.toFixed(1)} ${y.toFixed(1)}l${(flip ? l : l * 0.3).toFixed(1)} ${(flip ? -l * 0.35 : l * 0.9).toFixed(1)}`);
  }
  return out;
})();

type MapLabel = { t: string; x: number; y: number; w: number; s?: number; r?: number; c?: string; b?: number };
const LABELS: MapLabel[] = [
  { t: "やす荘", x: 264.500, y: 151.500, w: 15, s: 5.500 },
  { t: "セブンイレブン", x: 346, y: 150, w: 42 },
  { t: "第四", x: 431, y: 145, w: 12 },
  { t: "辻の城", x: 517, y: 154, w: 24, s: 7.500 },
  { t: "38m", x: 393.500, y: 183, w: 12, s: 6, c: "#666" },
  { t: "益城中央病院", x: 391, y: 204, w: 36 },
  { t: "ファミリーマート", x: 388, y: 228, w: 48 },
  { t: "木山", x: 461, y: 278.500, w: 15, s: 7.500 },
  { t: "17m", x: 517, y: 294.500, w: 12, s: 6, c: "#666" },
  { t: "益城町文化会館", x: 465, y: 322, w: 43 },
  { t: "霊雲山道安寺跡", x: 369, y: 329.500, w: 42 },
  { t: "中央公園", x: 324, y: 343.500, w: 23, c: "#3d9a3d" },
  { t: "県道28号線", x: 277, y: 347, w: 30, r: -24 },
  { t: "木山城跡", x: 529, y: 329, w: 24 },
  { t: "九州産交バス木山営業所", x: 574, y: 309.500, w: 67 },
  { t: "益城中央小", x: 734, y: 280, w: 30 },
  { t: "県道28号線", x: 720.500, y: 204, w: 31, r: -14 },
  { t: "県道57号線", x: 629, y: 331, w: 30, r: 62 },
  { t: "県道57号線", x: 767, y: 462, w: 31, r: 68 },
  { t: "あじさい", x: 327, y: 387.500, w: 24 },
  { t: "町民グラウンド", x: 411, y: 423, w: 42 },
  { t: "木山川", x: 254, y: 457, w: 18, c: "#7ab7d6", b: 400 },
  { t: "8m", x: 361, y: 524.500, w: 9, s: 6, c: "#666" },
  { t: "33m", x: 624.500, y: 591.500, w: 12, s: 6, c: "#666" },
];

const MapText = styled.text<{ $s: number; $b: number }>`
  font: ${(p) => p.$b} ${(p) => p.$s}px ${JP};
  paint-order: stroke;
  stroke: #f7f5ef;
  stroke-width: 1.600px;
`;

function Shield({ x, y }: { x: number; y: number }) {
  return (
    <g>
      <path d={`M${x - 5} ${y - 4}h10q1 5-1.500 7l-3.500 2-3.500-2q-2.500-2-1.500-7z`} fill="#fff" stroke="#8a8a8a" strokeWidth=".700" />
      <MapText $s={5} $b={500} x={x - 3.800} y={y + 2} textLength={7.600} lengthAdjust="spacingAndGlyphs" fill="#444">443</MapText>
    </g>
  );
}

function MapView() {
  const place = (s: Sheet) => `translate(${s.x} ${s.y}) scale(.33333)`;
  const strokes = (sets: Lines[], color: string) =>
    sets.map(([w, ls], i) => (
      <g key={i} stroke={color} strokeWidth={w} fill="none" strokeLinejoin="round">
        {ls.map((p, j) => <polyline key={j} points={p} />)}
      </g>
    ));
  return (
    <svg width="540.500" height="467" viewBox="264 127 540.500 467">
      <defs>
        <filter id="relief" x="-20%" y="-20%" width="140%" height="140%"><feGaussianBlur stdDeviation="1.300" /></filter>
      </defs>
      <rect x="264" y="127" width="541" height="467" fill="#f0efe8" />
      <g filter="url(#relief)" fill="none" stroke="#d8d4c8" strokeWidth="3">
        <path d="M515 265c6-14 14-28 30-34s22-14 20-26-8-18-2-22M520 250c14-8 20-12 36-22" />
        <path d="M640 268c30-10 50-28 64-42s24-18 60-26M727 165c20-4 18-12 40-8s20-16 36-14M735 150c20-12 40-8 60-16M640 280c20 0 30-16 60-30" />
        <path d="M735 185c14-2 20-10 34-8s14-14 34-16M740 172c16 0 18-8 30-6M775 135c8 6 16 0 28 4" />
        <path d="M270 325c20-12 34-8 50-14s18-24 30-10M276 356c18-4 24-18 40-20M480 312c14-6 24-12 30-6M490 345c12-4 16-14 24-20" />
        <path d="M612 590c6-14 18-18 30-10M618 594c8-10 16-8 24 0M540 270c20 2 30 8 44 6M440 240c10 0 20-10 34-6M560 150c10-8 20-18 34-30" />
        <path d="M290 175c20-6 34-4 50-14M300 270c20-6 40-8 60-2M575 290c20-12 44-22 70-30" />
      </g>
      <path d={HOUSES.join("")} stroke="#cfcdc5" strokeWidth=".900" fill="none" />
      <g transform="translate(530 110) scale(.33333)">
        <path d="M565 495L695 445 745 510 700 560 625 615 600 570z" fill="#ebe6ee" />
        <path d="M590 550L610 545 628 585 608 590z" fill="#aee2fb" />
      </g>
      {SHEETS.map((s, i) => <g key={i} transform={place(s)}>{strokes(s.sand, "#e6ded0")}</g>)}
      {SHEETS.map((s, i) => (
        <g key={i} transform={place(s)}>
          {s.green.map((p) => <polygon key={p} points={p} fill="#b7d499" />)}
          {strokes([[4, s.field]], "#dbdad4")}
          {strokes(s.water, "#aee2fb")}
        </g>
      ))}
      {SHEETS.map((s, i) => (
        <g key={i} transform={place(s)}>
          {strokes(s.roads.map(([w, l]) => [w + 2, l] as Lines), "#e6e4dc")}
          {strokes(s.roads, "#ffffff")}
        </g>
      ))}
      {LABELS.map((l, i) => (
        <MapText
          key={i} $s={l.s ?? 6.200} $b={l.b ?? 500} x={l.x} y={l.y} fill={l.c ?? "#333"}
          textLength={l.w} lengthAdjust="spacing"
          transform={l.r ? `rotate(${l.r} ${l.x} ${l.y})` : undefined}
        >
          {l.t}
        </MapText>
      ))}
      <Shield x={539} y={247} />
      <Shield x={521.500} y={489} />
      <path d="M790 581h4l1-1.500h3.500l1 1.500v7h-9.500zM792 584h6M792 586h4" fill="#f4f4f0" stroke="#999" strokeWidth=".900" />
    </svg>
  );
}

const MapColumn = styled.div`
  width: 540.500px;
  display: flex;
  flex-direction: column;
`;
const MapTabs = styled.div`
  height: 16.500px;
  padding-top: 4px;
  border-bottom: 1px solid #cdcdd0;
  display: flex;
`;
const MapTab = styled.span`
  width: 42px;
  height: 12px;
  padding-left: 3px;
  background: #d2d2d5;
  display: flex;
  align-items: center;
  gap: 3.500px;
  line-height: 12px;
`;
const TabMenu = styled.span`
  margin: 3px 3px 0 auto;
`;
const StatusBar = styled.div`
  height: 14px;
  background: #f7f9f9;
  display: flex;
  align-items: center;
  padding-left: 3px;
  line-height: 14px;
`;
const Scale = styled.span`
  width: 54px;
  height: 12px;
  border: 1px solid #c2c2c2;
  background: #fff;
  display: flex;
  align-items: center;
  justify-content: space-between;
  padding: 0 2px;
  line-height: 10px;
`;
const Sep = styled.i<{ $ml?: number }>`
  width: 1px;
  height: 9px;
  margin-left: ${(p) => p.$ml ?? 0}px;
  background: #c4c4c4;
`;
const Spot = styled.span<{ $ml: number; $dim?: boolean }>`
  margin-left: ${(p) => p.$ml}px;
  display: flex;
  align-items: center;
  color: ${(p) => (p.$dim ? "#9a9a9a" : "#444")};
`;

function MapPane() {
  return (
    <MapColumn>
      <MapTabs>
        <MapTab><Icon k="map" s={8.500} /><Fit w={14}>マップ</Fit><Icon k="close" s={5.500} /></MapTab>
        <TabMenu><Icon k="chev" s={5} /></TabMenu>
      </MapTabs>
      <MapView />
      <StatusBar>
        <Scale><Fit w={19}>1:8,940</Fit><Icon k="chev" s={3} /></Scale>
        <Sep $ml={2} />
        <Spot $ml={3}><Icon k="snap" s={8} /></Spot>
        <Spot $ml={3}><Icon k="grid" s={8} /></Spot>
        <Spot $ml={3}><Icon k="trace" s={8} /></Spot>
        <Spot $ml={3}><Icon k="cross" s={8} /></Spot>
        <Spot $ml={3}><Icon k="flip" s={8} /></Spot>
        <Spot $ml={3}><Icon k="chev" s={5} /></Spot>
        <Sep $ml={4} />
        <Spot $ml={107}><Fit w={80}>130.8321382°E 32.7860098°N</Fit></Spot>
        <Spot $ml={5}><Icon k="chev" s={5} /></Spot>
        <Sep $ml={107} />
        <Spot $ml={4}><Icon k="zoomSel" s={8} /></Spot>
        <Spot $ml={3} $dim><Fit w={40}>選択フィーチャ: 0</Fit></Spot>
        <Sep $ml={3} />
        <Spot $ml={4}><Icon k="box" s={7} /></Spot>
        <Sep $ml={4} />
        <Spot $ml={4}><Icon k="pause" s={7} h={8} /></Spot>
        <Sep $ml={4} />
        <Spot $ml={3}><Icon k="refresh" s={8} /></Spot>
      </StatusBar>
    </MapColumn>
  );
}

/* ---------- catalog ---------- */

const CatalogWrap = styled.div`
  padding: 3.500px 0 0 4px;
  display: flex;
  flex-direction: column;
`;
const CatTabs = styled.div`
  display: flex;
  height: 13px;
  padding: 0 4px 0 2.500px;
  gap: 6px;
  line-height: 12px;
`;
const CatTab = styled.span<{ $on?: boolean }>`
  height: 12px;
  border-bottom: ${(p) => (p.$on ? "1.500px solid #2a8fcf" : "0")};
  font-weight: ${(p) => (p.$on ? 600 : 400)};
`;
const CatMenu = styled.span`
  margin: 3px 0 0 auto;
`;
const TreeRow = styled.div<{ $depth: number }>`
  display: flex;
  align-items: center;
  height: 13px;
  line-height: 13px;
  padding-left: ${(p) => 5 + p.$depth * 9}px;
`;
const Twist = styled.span`
  width: 8px;
`;
const TreeIcon = styled.span`
  width: 13px;
`;
const BottomTabs = styled.div`
  display: flex;
  height: 11px;
  line-height: 9px;
`;
const BottomTab = styled.span<{ $on?: boolean }>`
  padding: 0 2.500px 0 2px;
  border: ${(p) => (p.$on ? "1px solid #5fb0de" : "1px solid transparent")};
  border-top: 0;
  background: ${(p) => (p.$on ? "#f7f9f9" : "transparent")};
  color: ${(p) => (p.$on ? "#2a8fcf" : INK)};
`;
const SearchHome = styled.span`
  display: flex;
  align-items: center;
  width: 8px;
  height: 11px;
  margin-right: 2px;
  border-right: 1px solid #c4c4c4;
`;

const TREE: [string, number, string, string, number][] = [
  ["closedArrow", 0, "fMap", "マップ", 14],
  ["closedArrow", 0, "fTool", "ツールボックス", 34],
  ["closedArrow", 0, "fDb", "データベース", 29],
  ["closedArrow", 0, "fStyle", "スタイル", 19],
  ["openArrow", 0, "fTask", "タスク", 14],
  ["", 1, "task", "想定被害額処理", 45],
  ["openArrow", 0, "fFolder", "フォルダー", 23],
  ["closedArrow", 1, "fHome", "plateau", 21],
  ["closedArrow", 0, "fLoc", "ロケーター", 23],
];

function CatalogPane() {
  return (
    <CatalogWrap>
      <Pane $w={200} $h={483.500} $active>
        <PaneTitle $active>
          <Fit w={26}>カタログ</Fit>
          <Controls><Icon k="chev" s={5} /><Icon k="pin" s={6} /><Icon k="close" s={6} /></Controls>
        </PaneTitle>
        <CatTabs>
          <CatTab $on><Fit w={31}>プロジェクト</Fit></CatTab>
          <CatTab><Fit w={21}>ポータル</Fit></CatTab>
          <CatTab><Fit w={33}>コンピューター</Fit></CatTab>
          <CatTab><Fit w={29}>お気に入り</Fit></CatTab>
          <CatMenu><Icon k="menu" s={8} h={7.500} /></CatMenu>
        </CatTabs>
        <Line $h={20} $pl={2} $gap={2}>
          <Icon k="backCircle" s={10} />
          <SearchBox $w={182}>
            <SearchHome><Icon k="homeBox" s={6} /></SearchHome>
            <Fit w={48}>プロジェクト の検索</Fit>
            <SearchEnd><Icon k="search" s={7} /><Icon k="chev" s={5} /></SearchEnd>
          </SearchBox>
        </Line>
        {TREE.map(([tw, d, ic, t, w]) => (
          <TreeRow key={t} $depth={d}>
            <Twist>{tw && <Icon k={tw} s={4} h={4.500} />}</Twist>
            <TreeIcon><Icon k={ic} s={9} /></TreeIcon>
            <Fit w={w}>{t}</Fit>
          </TreeRow>
        ))}
      </Pane>
      <BottomTabs>
        <BottomTab $on><Fit w={20}>カタログ</Fit></BottomTab>
        <BottomTab><Fit w={41}>ジオプロセシング</Fit></BottomTab>
      </BottomTabs>
    </CatalogWrap>
  );
}

/* ---------- task window ---------- */

const TaskShot = styled.section`
  width: 681px;
  height: 264px;
  margin-left: 37px;
  padding: 4px 3px 0 5px;
  background: #ebebeb;
`;
const TaskWin = styled.div`
  height: 260px;
  border: 2px solid #2a8dcb;
  border-bottom: 0;
  border-radius: 5px 5px 0 0;
  background: #f7f9f9;
  font-family: ${JP};
  color: #505050;
`;
const TaskTitle = styled.div`
  display: flex;
  align-items: center;
  height: 46px;
  padding: 0 4px 0 9px;
  font-size: 26px;
  line-height: 45px;
  color: #0f7fca;
`;
const TaskControls = styled.span`
  margin-left: auto;
  display: flex;
  align-items: center;
  font: 600 20px/46px "Open Sans", sans-serif;
  color: #5a5a5a;
`;
const TaskControl = styled.span<{ $w: number }>`
  width: ${(p) => p.$w}px;
  display: flex;
  justify-content: center;
`;
const TaskHeader = styled.div`
  display: flex;
  align-items: center;
  height: 38px;
  padding: 0 4px 0 244px;
  justify-content: space-between;
  font-size: 22px;
  line-height: 34px;
  color: #333;
`;
const HeaderMenu = styled.span`
  padding-top: 4px;
`;
const HeaderText = styled.span`
  height: 38px;
`;
const TaskTabs = styled.div`
  display: flex;
  gap: 16px;
  height: 49px;
  padding: 12px 0 0 10px;
  font-size: 22px;
  line-height: 35px;
`;
const TaskTab = styled.span<{ $on?: boolean }>`
  height: 37px;
  font-weight: ${(p) => (p.$on ? 500 : 400)};
  color: ${(p) => (p.$on ? "#3c3c3c" : "#585858")};
  border-bottom: ${(p) => (p.$on ? "3px solid #0f7ac4" : "0")};
`;
const TaskRows = styled.div`
  padding: 19px 1px 0 14px;
`;
const TaskRowLine = styled.div`
  display: flex;
  align-items: center;
  gap: 9px;
  height: 33.500px;
`;
const TaskRowBody = styled.div<{ $on?: boolean }>`
  display: flex;
  flex: 1;
  align-items: center;
  height: ${(p) => (p.$on ? 34 : 33)}px;
  padding-left: 3px;
  border: 2px solid ${(p) => (p.$on ? "#2a8dcb" : "transparent")};
  background: ${(p) => (p.$on ? "#c5daee" : "transparent")};
  font-size: 19.500px;
  line-height: 28px;
`;
const RowIcon = styled.span`
  margin-right: 7px;
`;

const TASKS: [string, number, string, number][] = [
  ["1． 2．", 70, "シミュレーション前", 124],
  ["3．", 34, "被害対象シミュレーションデータ作成", 259],
  ["4 以降．", 71, "シミュレーション後操作", 162],
];

function TaskWindow() {
  return (
    <TaskShot>
      <TaskWin>
        <TaskTitle>
          <Fit w={56}>タスク</Fit>
          <TaskControls>
            <TaskControl $w={22}>?</TaskControl>
            <TaskControl $w={29}><Icon k="chev" s={17} /></TaskControl>
            <TaskControl $w={29}><Icon k="pin" s={18} /></TaskControl>
            <TaskControl $w={29}><Icon k="close" s={18} /></TaskControl>
          </TaskControls>
        </TaskTitle>
        <TaskHeader>
          <HeaderText><Fit w={152}>想定被害額処理</Fit></HeaderText>
          <HeaderMenu><Icon k="menu" s={23} h={22} /></HeaderMenu>
        </TaskHeader>
        <TaskTabs>
          <TaskTab $on><Fit w={47}>タスク</Fit></TaskTab>
          <TaskTab><Fit w={75}>メッセージ</Fit></TaskTab>
        </TaskTabs>
        <TaskRows>
          {TASKS.map(([no, nw, t, w], i) => (
            <TaskRowLine key={t}>
              <Icon k="closedArrow" s={9} h={13} />
              <TaskRowBody $on={i === 0}>
                <RowIcon><Icon k="fTask" s={25} h={23} /></RowIcon>
                <Fit w={nw}>{no}</Fit>
                <Fit w={w}>{t}</Fit>
              </TaskRowBody>
            </TaskRowLine>
          ))}
        </TaskRows>
      </TaskWin>
    </TaskShot>
  );
}

const Guide = styled.p`
  margin: 56px 0 0 1px;
  font-size: 37.500px;
  line-height: 45px;
  color: #000;
  display: flex;
  flex-direction: column;
`;
const Notice = styled.aside`
  width: 1089px;
  height: 136px;
  margin-left: 18px;
  padding: 8px 0 0 15px;
  background: #e19836;
  color: #fff;
  font-size: 33px;
  line-height: 40px;
  display: flex;
  flex-direction: column;
`;

/* ---------- annotations that lie over the window ---------- */

const Bubble = styled.div<{ $x: number; $y: number; $w: number; $h: number }>`
  position: absolute;
  left: ${(p) => p.$x}px;
  top: ${(p) => p.$y}px;
  width: ${(p) => p.$w}px;
  height: ${(p) => p.$h}px;
`;
const BubbleShape = styled.svg`
  position: absolute;
  left: 0;
  top: 0;
`;
const BubbleText = styled.div<{ $pt: number }>`
  position: relative;
  display: flex;
  flex-direction: column;
  align-items: center;
  padding-top: ${(p) => p.$pt}px;
  color: #fff;
  font: 700 24px/30px ${JP};
`;
const RedFrame = styled.div<{ $x: number; $y: number }>`
  position: absolute;
  left: ${(p) => p.$x}px;
  top: ${(p) => p.$y}px;
  width: 103px;
  height: 41px;
  border: 6px solid #fe0000;
`;

function Callouts() {
  return (
    <>
      <RedFrame $x={803} $y={205} />
      <RedFrame $x={796} $y={585} />
      <Bubble $x={347} $y={0} $w={708} $h={114}>
        <BubbleShape width="708" height="114" viewBox="347 0 708 114">
          <path
            d="M363 1H1038a15 15 0 0 1 15 15V68a15 15 0 0 1-15 15H936L825 111 760 83H364a15 15 0 0 1-15-15V16a15 15 0 0 1 15-15z"
            fill="#5fb0ec" stroke="#06304e" strokeWidth="2"
          />
        </BubbleShape>
        <BubbleText $pt={12}>
          <Fit w={645}>① [カタログ] ウィンドウが表示されていることを確認(複数タブ</Fit>
          <Fit w={486}>が表示されている場合はカタログのタブを開く)</Fit>
        </BubbleText>
      </Bubble>
      <Bubble $x={431} $y={252} $w={466} $h={178}>
        <BubbleShape width="466" height="178" viewBox="431 252 466 178">
          <path
            d="M447 346H703L814 254.500 818.500 346H881a15 15 0 0 1 15 15V413a15 15 0 0 1-15 15H447a15 15 0 0 1-15-15V361a15 15 0 0 1 15-15z"
            fill="#5fb0ec" stroke="#06304e" strokeWidth="2"
          />
        </BubbleShape>
        <BubbleText $pt={105}>
          <Fit w={415}>② [タスク] をダブルクリックし、「想定被</Fit>
          <Fit w={286}>害額処理」をダブルクリック</Fit>
        </BubbleText>
      </Bubble>
    </>
  );
}

export default function App() {
  return (
    <Slide lang="ja">
      <Global />
      <TopRow>
        <Win>
          <RibbonBar />
          <Dock>
            <ContentsPane />
            <MapPane />
            <CatalogPane />
          </Dock>
        </Win>
        <RightColumn>
          <TaskWindow />
          <Guide>
            <Fit w={821}>アプリ画面左側に想定被害額処理の [タスク] ウィ</Fit>
            <Fit w={613}>ンドウが表示されたら次のステップへ</Fit>
          </Guide>
        </RightColumn>
      </TopRow>
      <Notice>
        <Fit w={132}>注意事項</Fit>
        <Fit w={1021}>上記方法以外にもタスクウィンドウを表示させる方法はありますので、</Fit>
        <Fit w={743}>どの方法で表示していただいても問題ありません。</Fit>
      </Notice>
      <Callouts />
    </Slide>
  );
}
